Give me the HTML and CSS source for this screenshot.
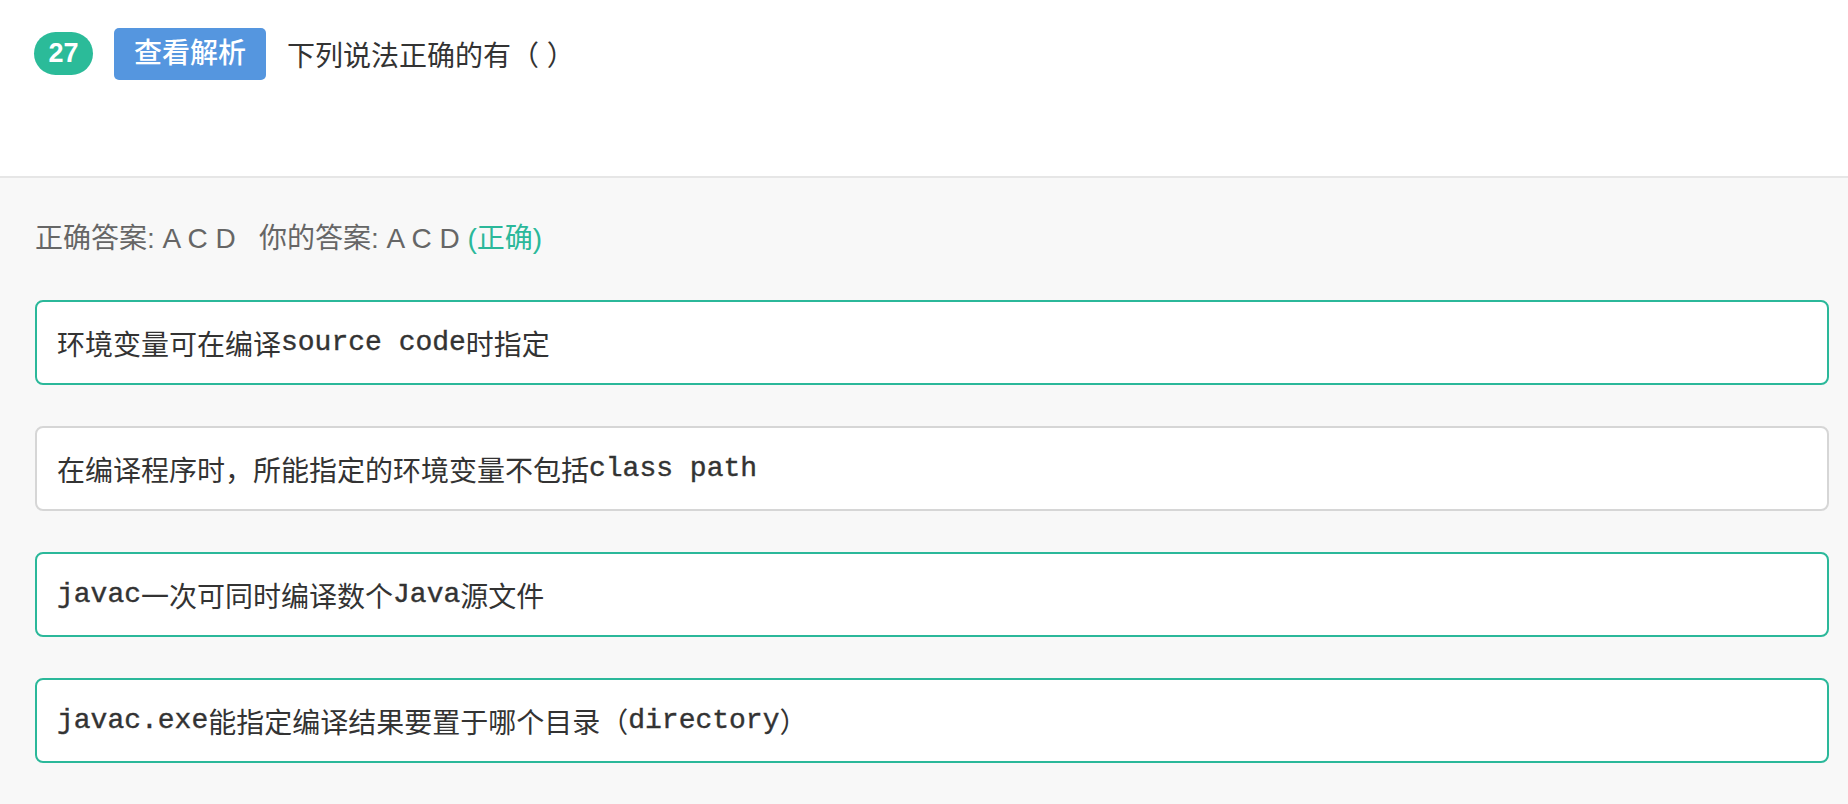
FILE: index.html
```html
<!DOCTYPE html>
<html lang="zh-CN">
<head>
<meta charset="utf-8">
<title>题目 27</title>
<link rel="stylesheet" href="styles.css">
</head>
<body>
<div class="question">
  <div class="q-head">
    <span class="q-num">27</span>
    <span class="q-btn">查看解析</span>
    <span class="q-title">下列说法正确的有（ ）</span>
  </div>
  <div class="q-body">
    <div class="q-answer">正确答案: A C D&nbsp;&nbsp;&nbsp;你的答案: A C D <span class="ok">(正确)</span></div>
    <ul class="options">
      <li class="opt opt-right">环境变量可在编译<span class="code">source code</span>时指定</li>
      <li class="opt">在编译程序时，所能指定的环境变量不包括<span class="code">class path</span></li>
      <li class="opt opt-right"><span class="code">javac</span>一次可同时编译数个<span class="code">Java</span>源文件</li>
      <li class="opt opt-right"><span class="code">javac.exe</span>能指定编译结果要置于哪个目录（<span class="code">directory</span>）</li>
    </ul>
  </div>
</div>
</body>
</html>
```
FILE: styles.css
```css
html, body {
  margin: 0;
  padding: 0;
  background: #f8f8f8;
}
body {
  font-family: "Liberation Sans", "Noto Sans CJK SC", sans-serif;
  color: #333;
}
.question {
  width: 100%;
}
.q-head {
  box-sizing: border-box;
  height: 178px;
  padding: 28px 19px 0 34px;
  background: #fff;
  border-bottom: 2px solid #e6e6e6;
  display: flex;
  align-items: flex-start;
  gap: 21px;
}
.q-num {
  margin-top: 4px;
  height: 43px;
  min-width: 59px;
  border-radius: 22px;
  background: #2bbb99;
  color: #fff;
  font-weight: 700;
  font-size: 27px;
  line-height: 43px;
  text-align: center;
}
.q-btn {
  box-sizing: border-box;
  height: 52px;
  width: 152px;
  border-radius: 5px;
  background: #5596df;
  color: #fff;
  font-size: 28px;
  font-weight: 500;
  line-height: 52px;
  text-align: center;
}
.q-title {
  font-size: 28px;
  line-height: 52px;
  padding-top: 3px;
  color: #333;
}
.q-body {
  padding: 41px 19px 0 35px;
}
.q-answer {
  font-size: 28px;
  line-height: 40px;
  color: #666;
}
.q-answer .ok {
  color: #2bb89a;
}
.options {
  list-style: none;
  margin: 41px 0 0;
  padding: 0;
  display: flex;
  flex-direction: column;
  gap: 41px;
}
.opt {
  box-sizing: border-box;
  height: 85px;
  border: 2px solid #d6d6d6;
  border-radius: 8px;
  background: #fff;
  padding: 0 20px;
  display: flex;
  align-items: center;
  font-size: 28px;
  color: #333;
  white-space: pre;
}
.opt-right {
  border-color: #2bb89a;
}
.code {
  font-family: "Liberation Mono", "Noto Sans CJK SC", monospace;
  font-weight: 400;
  font-size: 28px;
  -webkit-text-stroke: 0.4px #333;
}
```
